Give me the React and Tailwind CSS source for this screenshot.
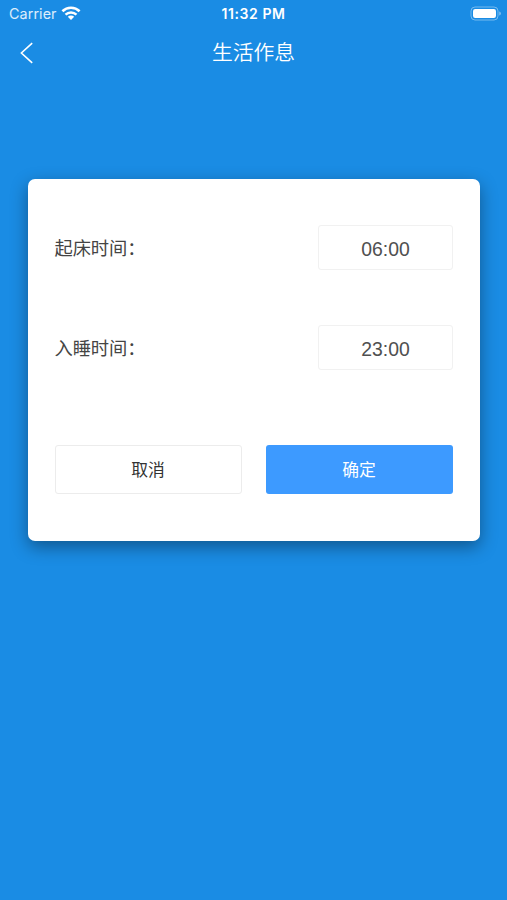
import { useState } from "react";

const rows = [
  { key: "wake", label: "起床时间：" },
  { key: "sleep", label: "入睡时间：" },
];

const WifiIcon = () => (
  <svg width="20" height="16" viewBox="0 0 20 16" fill="none" stroke="#fff">
    <path d="M1.4 5.2C6.2.6 13.8.6 18.6 5.2" strokeWidth="2.6" />
    <path d="M4.5 8.6C7.6 5.7 12.4 5.7 15.5 8.6" strokeWidth="2.4" />
    <path d="M10 14L6.8 10.8C8.6 9.2 11.4 9.2 13.2 10.8Z" fill="#fff" stroke="none" />
  </svg>
);

const BatteryIcon = () => (
  <svg width="32" height="16" viewBox="0 0 32 16" fill="none">
    <rect x="1" y="1" width="27" height="13" rx="4" stroke="#fff" strokeOpacity="0.4" />
    <rect x="3" y="3" width="23" height="9" rx="2.2" fill="#fff" />
    <path d="M29.3 5.5v4c.9-.3 1.5-1.1 1.5-2s-.6-1.7-1.5-2z" fill="#fff" fillOpacity="0.5" />
  </svg>
);

const StatusBar = () => (
  <div className="grid h-7 grid-cols-[1fr_100px_1fr] items-center pl-[9px] pr-[5px] font-['Inter','Liberation_Sans',sans-serif] text-white">
    <div className="flex items-center gap-1">
      <span className="text-[14.3px] tracking-[0.1px] text-white/85">Carrier</span>
      <WifiIcon />
    </div>
    <span className="-ml-1 pb-[2px] text-center text-[14px] font-semibold tracking-[0.6px]">11:32 PM</span>
    <div className="flex justify-end">
      <BatteryIcon />
    </div>
  </div>
);

const App = () => {
  const [times] = useState({ wake: "06:00", sleep: "23:00" });

  return (
    <div className="h-[900px] w-[507px] overflow-hidden bg-[#1a8ce4] font-['Noto_Sans_CJK_SC',sans-serif]">
      <StatusBar />

      {/* Nav bar */}
      <div className="grid h-12 grid-cols-[60px_1fr_60px] items-center text-white">
        <button className="pl-5 pt-[2px]">
          <svg width="14" height="22" viewBox="0 0 14 22" fill="none" stroke="#fff" strokeWidth="1.6">
            <path d="M12.2 1.2L1.4 11L12.2 20.8" />
          </svg>
        </button>
        <h1 className="text-center text-[20.8px] font-[350]">生活作息</h1>
      </div>

      {/* Form card */}
      <div className="mx-[27.5px] mt-[103.4px] h-[361.6px] rounded-[7px] bg-white px-[27px] pt-[46px] shadow-[0_6px_17px_rgba(0,0,0,0.38)]">
        <div className="flex flex-col gap-[55px]">
          {rows.map((row) => (
            <div key={row.key} className="flex h-[45px] items-center justify-between">
              <span className="text-[18.3px] tracking-[-0.1px] text-[#444]">{row.label}</span>
              <div className="flex h-[45px] w-[135px] items-center justify-center rounded-[3px] border border-[#f1f1f1] pl-px pt-[3px] font-['Liberation_Sans',sans-serif] text-[19.4px] text-[#505050]">
                {times[row.key]}
              </div>
            </div>
          ))}
        </div>

        <div className="mt-[75px] flex justify-between text-[16.8px]">
          <button className="h-[49px] w-[187px] rounded-[3px] border border-[#ececec] pb-px text-[#333]">取消</button>
          <button className="h-[49px] w-[187px] rounded-[3px] bg-[#3d9aff] pb-px text-white">确定</button>
        </div>
      </div>
    </div>
  );
};

export default App;
